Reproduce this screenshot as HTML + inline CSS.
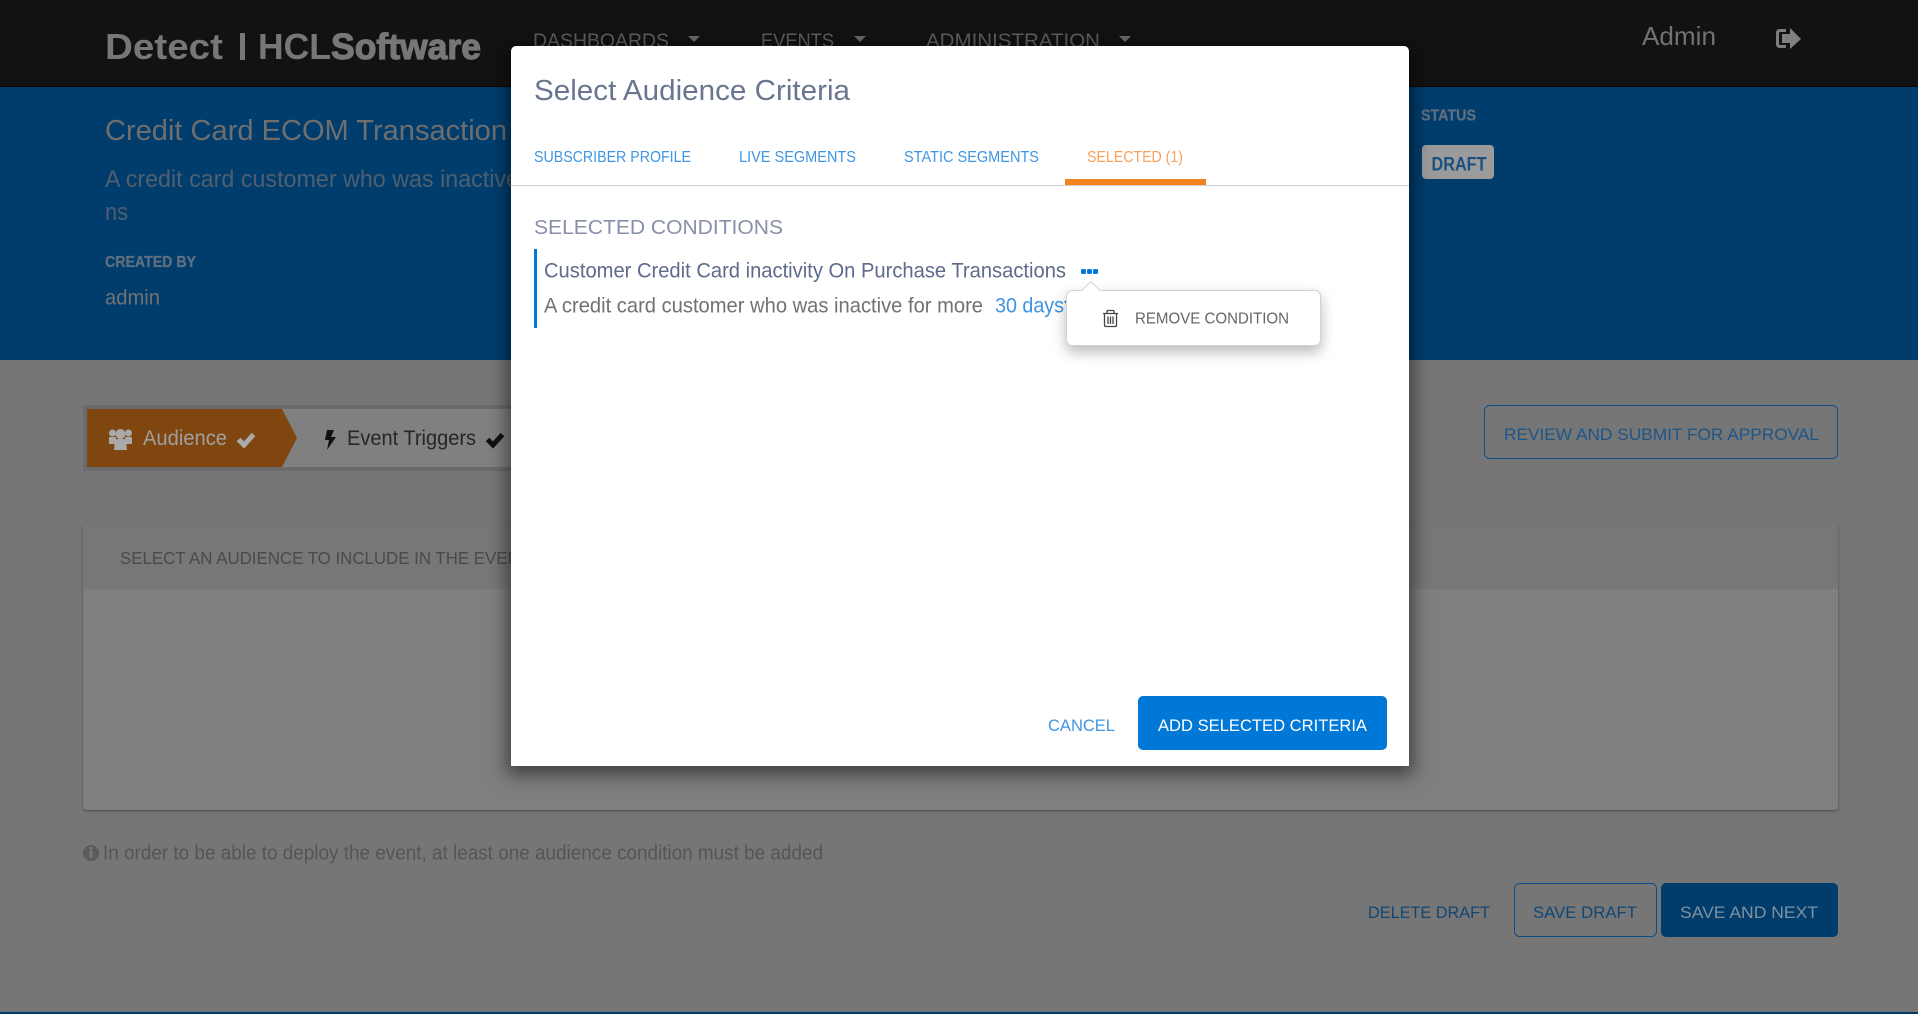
<!DOCTYPE html>
<html><head><meta charset="utf-8"><style>
html,body{margin:0;padding:0;width:1918px;height:1014px;overflow:hidden;background:#767676}
svg{position:absolute;left:0;top:0;display:block}
svg text{font-family:"Liberation Sans",Arial,sans-serif}
.m{position:absolute;left:511px;top:46px;width:898px;height:720px;background:#fff;border-radius:5px 5px 0 0;box-shadow:0 5px 18px 4px rgba(0,0,0,.5)}
.p{position:absolute;left:1066px;top:290px;width:255px;height:56px;background:#fff;border:1px solid #d2d2d2;box-sizing:border-box;border-radius:6px;box-shadow:0 6px 14px rgba(0,0,0,.28)}
.c{position:absolute;left:83px;top:524px;width:1755px;height:286px;background:#7f7f7f;border-radius:3px;box-shadow:0 1px 2px rgba(0,0,0,.4)}
.ch{height:65px;background:#777;border-radius:3px 3px 0 0}
</style></head><body>
<svg width="1918" height="1014" viewBox="0 0 1918 1014">
<rect width="1918" height="87" fill="#121212"/>
<rect y="86" width="1918" height="1" fill="#060606"/>
<rect y="87" width="1918" height="273" fill="#003d6d"/>
<rect y="1012" width="1918" height="2" fill="#003d6d"/>
<g fill="#777">
<text x="105" y="59" font-size="36" font-weight="bold" textLength="118" lengthAdjust="spacingAndGlyphs">Detect</text>
<rect x="240" y="33" width="5" height="27"/>
<text x="258" y="59" font-size="36" font-weight="bold" textLength="73" lengthAdjust="spacingAndGlyphs">HCL</text>
<text x="331" y="59" font-size="36" font-weight="bold" stroke="#777" stroke-width="1.200" textLength="150" lengthAdjust="spacingAndGlyphs">Software</text>
</g>
<g fill="#5f5f5f" font-size="19">
<text x="533" y="47" textLength="136" lengthAdjust="spacingAndGlyphs">DASHBOARDS</text>
<text x="761" y="47" textLength="73" lengthAdjust="spacingAndGlyphs">EVENTS</text>
<text x="926" y="47" textLength="174" lengthAdjust="spacingAndGlyphs">ADMINISTRATION</text>
<path d="M688 36h12l-6 6zM854 36h12l-6 6zM1119 36h12l-6 6z" fill="#6a6a6a"/>
</g>
<text x="1642" y="45" font-size="26" fill="#727272" textLength="74" lengthAdjust="spacingAndGlyphs">Admin</text>
<path d="M1786 29h-6q-4 0-4 4v11q0 4 4 4h6v-3h-6q-1 0-1-1v-11q0-1 1-1h6z" fill="#7d7d7d"/>
<path d="M1782 34h8v-6l11 11-11 10v-6h-8z" fill="#808080"/>
<text x="105" y="140" font-size="29" fill="#6e6e6e" textLength="402" lengthAdjust="spacingAndGlyphs">Credit Card ECOM Transaction</text>
<text x="105" y="187" font-size="24" fill="#4f5f70" textLength="414" lengthAdjust="spacingAndGlyphs">A credit card customer who was inactive</text>
<text x="105" y="220" font-size="24" fill="#4f5f70" textLength="23" lengthAdjust="spacingAndGlyphs">ns</text>
<text x="105" y="267" font-size="15.500" font-weight="bold" fill="#5f6f7f" stroke="#5f6f7f" stroke-width=".3" textLength="91" lengthAdjust="spacingAndGlyphs">CREATED BY</text>
<text x="105" y="304.500" font-size="21" fill="#727272" textLength="55" lengthAdjust="spacingAndGlyphs">admin</text>
<text x="1421" y="120.500" font-size="15.500" font-weight="bold" fill="#5f6f7f" stroke="#5f6f7f" stroke-width=".3" textLength="55" lengthAdjust="spacingAndGlyphs">STATUS</text>
<rect x="1422" y="145" width="72" height="34" rx="4" fill="#9b9b9b"/>
<text x="1431.500" y="170.500" font-size="19" font-weight="bold" fill="#1a5080" textLength="55" lengthAdjust="spacingAndGlyphs">DRAFT</text>
<rect x="1484.500" y="405.500" width="353" height="53" rx="5" fill="none" stroke="#0f4e84"/>
<text x="1504" y="440" font-size="17" fill="#1c5688" textLength="315" lengthAdjust="spacingAndGlyphs">REVIEW AND SUBMIT FOR APPROVAL</text>
<rect x="85" y="407" width="500" height="62" fill="#808080" stroke="#6b6b6b" stroke-width="4"/>
<path d="M87 409H282L297 438L282 467H87Z" fill="#7f460f"/>
<g fill="#a9a9a9">
<circle cx="120.500" cy="434" r="5"/><circle cx="112.500" cy="433" r="3.500"/><circle cx="128.500" cy="433" r="3.500"/>
<path d="M109 437h7v7h-7zM125 437h7v7h-7z"/><path d="M115 440q5.500-3 11 0l1 10h-13z"/>
</g>
<text x="143" y="445" font-size="21" fill="#a0a0a0" textLength="84" lengthAdjust="spacingAndGlyphs">Audience</text>
<path d="M238.500 439.500l5.500 5.500 9.500-10.500" fill="none" stroke="#aaa" stroke-width="5"/>
<path d="M327 430h7l-3 7h5l-9 13 2-10h-4z" fill="#111"/>
<text x="347" y="445" font-size="21" fill="#262626" textLength="129" lengthAdjust="spacingAndGlyphs">Event Triggers</text>
<path d="M487.500 439.500l5.500 5.500 9.500-10.500" fill="none" stroke="#111" stroke-width="5"/>
</svg>
<div class="c"><div class="ch"></div></div>
<svg width="1918" height="1014" viewBox="0 0 1918 1014">
<text x="120" y="564" font-size="17.500" fill="#4a4a4a" textLength="410" lengthAdjust="spacingAndGlyphs">SELECT AN AUDIENCE TO INCLUDE IN THE EVENT</text>
<circle cx="91" cy="853" r="8" fill="#5c5c5c"/><rect x="89.500" y="851" width="3" height="7" fill="#767676"/><rect x="89.500" y="847" width="3" height="3" fill="#767676"/>
<text x="103" y="859.500" font-size="20" fill="#555" textLength="720" lengthAdjust="spacingAndGlyphs">In order to be able to deploy the event, at least one audience condition must be added</text>
<text x="1368" y="918" font-size="17" fill="#124672" textLength="122" lengthAdjust="spacingAndGlyphs">DELETE DRAFT</text>
<rect x="1514.500" y="883.500" width="142" height="53" rx="5" fill="none" stroke="#0f4e84"/>
<text x="1533" y="918" font-size="17" fill="#124672" textLength="104" lengthAdjust="spacingAndGlyphs">SAVE DRAFT</text>
<rect x="1661" y="883" width="177" height="54" rx="5" fill="#003d6d"/>
<text x="1680" y="918" font-size="17" fill="#7f919f" textLength="138" lengthAdjust="spacingAndGlyphs">SAVE AND NEXT</text>
</svg>
<div class="m"></div>
<svg width="1918" height="1014" viewBox="0 0 1918 1014">
<text x="534" y="100" font-size="29" fill="#6a7592" textLength="316" lengthAdjust="spacingAndGlyphs">Select Audience Criteria</text>
<rect x="511" y="185" width="898" height="1" fill="#cfcfcf"/>
<g font-size="15.500" fill="#3f95e3">
<text x="534" y="162" textLength="157" lengthAdjust="spacingAndGlyphs">SUBSCRIBER PROFILE</text>
<text x="739" y="162" textLength="117" lengthAdjust="spacingAndGlyphs">LIVE SEGMENTS</text>
<text x="904" y="162" textLength="135" lengthAdjust="spacingAndGlyphs">STATIC SEGMENTS</text>
<text x="1087" y="162" fill="#f9a05c" textLength="96" lengthAdjust="spacingAndGlyphs">SELECTED (1)</text>
</g>
<rect x="1065" y="179" width="141" height="6" fill="#f58220"/>
<text x="534" y="234" font-size="20" fill="#8790a8" textLength="249" lengthAdjust="spacingAndGlyphs">SELECTED CONDITIONS</text>
<rect x="534" y="249" width="3" height="79" fill="#0078d8"/>
<text x="544" y="277.500" font-size="21" fill="#5f6b8a" textLength="522" lengthAdjust="spacingAndGlyphs">Customer Credit Card inactivity On Purchase Transactions</text>
<rect x="1081" y="269" width="5" height="5" rx="1.500" fill="#0078d8"/><rect x="1087" y="269" width="5" height="5" rx="1.500" fill="#0078d8"/><rect x="1093" y="269" width="5" height="5" rx="1.500" fill="#0078d8"/>
<text x="544" y="312.500" font-size="21" fill="#727272" textLength="439" lengthAdjust="spacingAndGlyphs">A credit card customer who was inactive for more</text>
<text x="995" y="312.500" font-size="21" fill="#3f95e3" textLength="69" lengthAdjust="spacingAndGlyphs">30 days</text>
<path d="M1064 301h7l-3.500 5z" fill="#0078d8"/>
<text x="1048" y="731" font-size="17" fill="#3f95e3" textLength="67" lengthAdjust="spacingAndGlyphs">CANCEL</text>
<rect x="1138" y="696" width="249" height="54" rx="5" fill="#0078d8"/>
<text x="1158" y="731" font-size="17" fill="#fff" textLength="209" lengthAdjust="spacingAndGlyphs">ADD SELECTED CRITERIA</text>
</svg>
<div class="p"></div>
<svg width="1918" height="1014" viewBox="0 0 1918 1014">
<path d="M1082 290.500L1091 281.500L1100 290.500Z" fill="#fff" stroke="#d8d8d8"/>
<rect x="1083" y="290" width="16" height="2" fill="#fff"/>
<g fill="none" stroke="#444" stroke-width="1.300">
<path d="M1103 313.500h15M1107 313.500v-2q0-1 1-1h5q1 0 1 1v2"/>
<path d="M1104.500 314v11q0 1.500 1.500 1.500h9q1.500 0 1.500-1.500v-11"/>
<path d="M1108 316.500v7.500M1110.500 316.500v7.500M1113 316.500v7.500"/>
</g>
<text x="1135" y="323.500" font-size="15.500" fill="#666" textLength="154" lengthAdjust="spacingAndGlyphs">REMOVE CONDITION</text>
</svg>
</body></html>
